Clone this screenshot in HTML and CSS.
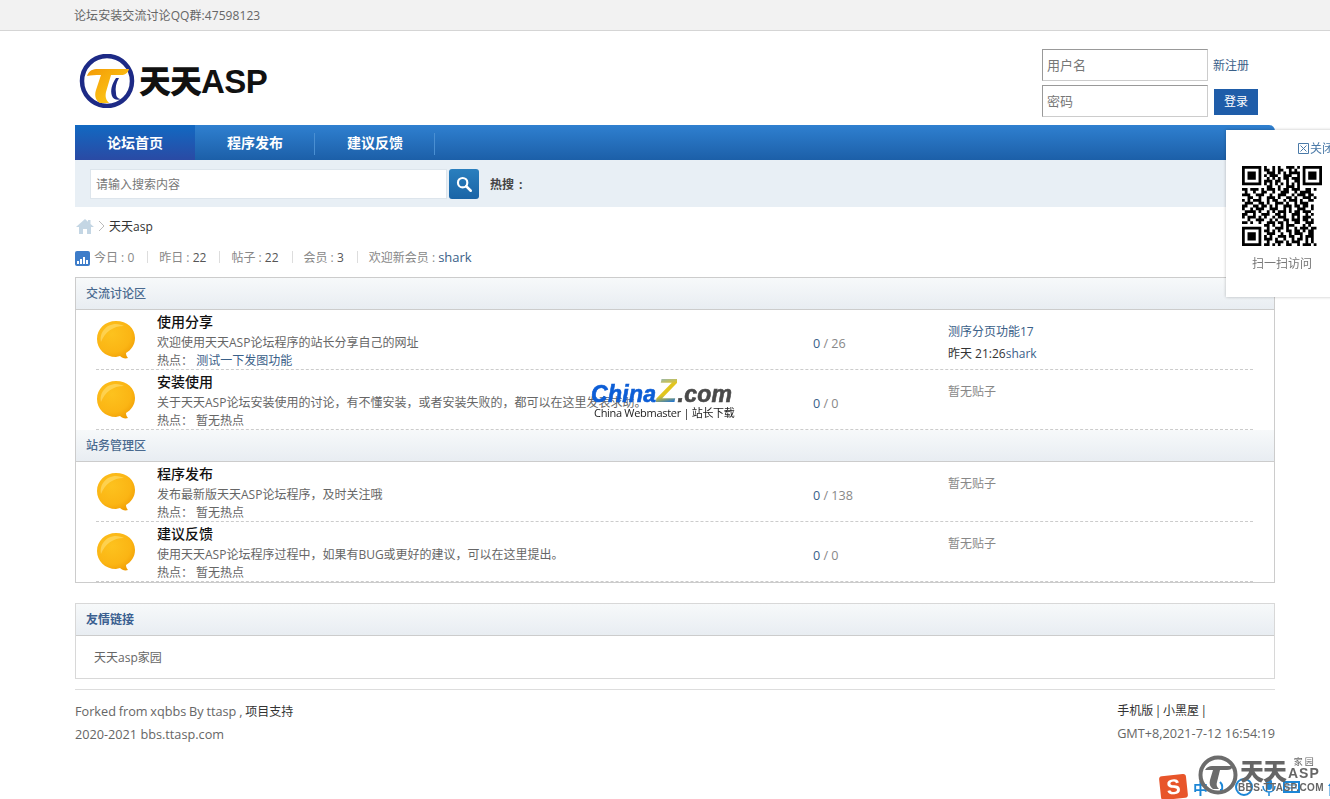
FILE: index.html
```html
<!DOCTYPE html>
<html lang="zh-CN">
<head>
<meta charset="utf-8">
<title>天天ASP</title>
<link rel="stylesheet" href="styles.css">
</head>
<body>
<div class="topbar"><div class="wrap">论坛安装交流讨论QQ群:47598123</div></div>
<div class="wrap">
  <header class="head">
    <a class="logo">
      <svg class="logo-mark" viewBox="0 0 58 54" width="58" height="54" aria-hidden="true">
        <defs><linearGradient id="lg" x1="0" y1="0" x2="1" y2="1"><stop offset="0" stop-color="#f39a06"/><stop offset="1" stop-color="#ffd21a"/></linearGradient></defs>
        <circle cx="29" cy="27" r="25" fill="none" stroke="#1d2a86" stroke-width="4.5"/>
        <path d="M9 22c2-6 6-7 11-7h31c-1 4-4 6-8 6H33l-5 17c-1 5 0 8 3 11h-9c-4-2-6-7-4-13l5-15c-6 0-10 0-14 1z" fill="url(#lg)"/>
        <path d="M38 24c-4 6-6 12-4 18 1 3 5 5 10 3-4 0-6-2-6-6-1-5 0-10 3-15z" fill="#1d2a86"/>
      </svg>
      <span class="logo-text">天天<b>ASP</b></span>
    </a>
    <form class="login">
      <div class="login-row"><input class="field" placeholder="用户名"><a class="link">新注册</a></div>
      <div class="login-row"><input class="field" placeholder="密码"><button class="btn" type="button">登录</button></div>
    </form>
  </header>

  <nav class="nav">
    <a class="nav-item active">论坛首页</a>
    <a class="nav-item">程序发布</a>
    <a class="nav-item">建议反馈</a>
  </nav>
  <div class="search">
    <input class="search-input" placeholder="请输入搜索内容">
    <button class="search-btn" type="button" aria-label="搜索">
      <svg viewBox="0 0 20 20" width="18" height="18" aria-hidden="true"><circle cx="8.5" cy="8.5" r="5.2" fill="none" stroke="#fff" stroke-width="2.4"/><path d="M12.5 12.5l5 5" stroke="#fff" stroke-width="2.8" stroke-linecap="round"/></svg>
    </button>
    <strong class="hot">热搜 :</strong>
  </div>

  <div class="crumb">
    <svg viewBox="0 0 18 16" width="18" height="16" aria-hidden="true"><path d="M9 1L0 9h3v7h4v-5h4v5h4V9h3l-3.500-3V2h-2.500v1.800z" fill="#c4d6e4"/></svg>
    <svg viewBox="0 0 8 12" width="8" height="12" aria-hidden="true"><path d="M1 1l5 5-5 5" fill="none" stroke="#bbb"/></svg>
    <span>天天asp</span>
  </div>

  <div class="stats">
    <svg viewBox="0 0 15 15" width="15" height="15" aria-hidden="true"><rect width="15" height="15" rx="2" fill="#3d7cc9"/><path d="M2 10h2v3H2zM5 8h2v5H5zM8 6h2v7H8zM11 9h2v4h-2z" fill="#fff"/></svg>
    <span class="stat first">今日 : 0</span>
    <span class="stat">昨日 : <i>22</i></span>
    <span class="stat">帖子 : <i>22</i></span>
    <span class="stat">会员 : <i>3</i></span>
    <span class="stat">欢迎新会员 : <a class="link">shark</a></span>
  </div>

  <section class="board">
    <h2 class="sec-title">交流讨论区</h2>
    <div class="row">
      <svg class="bubble" viewBox="0 0 40 40" aria-hidden="true"><use href="#bubble"/></svg>
      <div class="info"><h3>使用分享</h3><p>欢迎使用天天ASP论坛程序的站长分享自己的网址</p><p>热点： <a class="link">测试一下发图功能</a></p></div>
      <div class="count"><b>0</b> / 26</div>
      <div class="last"><a class="link">测序分页功能17</a><span class="dark">昨天 21:26<a class="link">shark</a></span></div>
    </div>
    <div class="row">
      <svg class="bubble" viewBox="0 0 40 40" aria-hidden="true"><use href="#bubble"/></svg>
      <div class="info"><h3>安装使用</h3><p>关于天天ASP论坛安装使用的讨论，有不懂安装，或者安装失败的，都可以在这里发表求助。</p><p>热点： 暂无热点</p></div>
      <div class="count"><b>0</b> / 0</div>
      <div class="last none">暂无贴子</div>
    </div>
    <h2 class="sec-title">站务管理区</h2>
    <div class="row">
      <svg class="bubble" viewBox="0 0 40 40" aria-hidden="true"><use href="#bubble"/></svg>
      <div class="info"><h3>程序发布</h3><p>发布最新版天天ASP论坛程序，及时关注哦</p><p>热点： 暂无热点</p></div>
      <div class="count"><b>0</b> / 138</div>
      <div class="last none">暂无贴子</div>
    </div>
    <div class="row">
      <svg class="bubble" viewBox="0 0 40 40" aria-hidden="true"><use href="#bubble"/></svg>
      <div class="info"><h3>建议反馈</h3><p>使用天天ASP论坛程序过程中，如果有BUG或更好的建议，可以在这里提出。</p><p>热点： 暂无热点</p></div>
      <div class="count"><b>0</b> / 0</div>
      <div class="last none">暂无贴子</div>
    </div>
  </section>

  <section class="friends">
    <h2 class="sec-title strong">友情链接</h2>
    <div class="friend-body">天天asp家园</div>
  </section>

  <footer class="foot">
    <div><div class="foot-line">Forked from xqbbs By ttasp , <span class="dark">项目支持</span></div><div>2020-2021 bbs.ttasp.com</div></div>
    <div><div class="dark foot-nav">手机版 | 小黑屋 |</div><div>GMT+8,2021-7-12 16:54:19</div></div>
  </footer>
</div>

<svg class="defs" width="0" height="0" aria-hidden="true">
  <defs>
    <radialGradient id="bg" cx=".4" cy=".35" r=".75"><stop offset="0" stop-color="#fdc21e"/><stop offset=".65" stop-color="#fbb514"/><stop offset="1" stop-color="#ee9a02"/></radialGradient>
    <symbol id="bubble" viewBox="0 0 40 40">
      <path d="M20 1c11 0 19 7 19 17 0 7-4 12-9 15 0 2 1 4 2 5-3 1-6 0-8-2-1 0-3 1-4 1C9 37 1 29 1 19 1 9 9 1 20 1z" fill="url(#bg)"/>
      <path d="M5 22C3 13 10 4 20 4c3 0 6 1 8 2C17 6 9 12 5 22z" fill="#ffe27a" opacity=".55"/>
    </symbol>
  </defs>
</svg>

<aside class="qr-pop">
  <div class="qr-close"><svg viewBox="0 0 12 12" width="12" height="12" aria-hidden="true"><path d="M.5.500h10v10H.5zM2.500 2.500l6 6M8.500 2.500l-6 6" fill="none" stroke="#4b7aa8"/></svg>关闭</div>
  <svg class="qr" viewBox="0 0 29 29" width="80" height="80" aria-hidden="true">
    <path d="M0 0h7v7H0zM1 1v5h5V1zM2 2h3v3H2zM22 0h7v7h-7zM23 1v5h5V1zM24 2h3v3h-3zM0 22h7v7H0zM1 23v5h5v-5zM2 24h3v3H2z" fill-rule="evenodd"/>
    <path fill="none" stroke="#000" d="M8 .5h1m2 0h1m1 0h1m2 0h3m1 0h1M8 1.500h2m1 0h1m1 0h2m2 0h1m1 0h1M9 2.500h3m1 0h1m1 0h1m1 0h4M8 3.500h1m1 0h3m2 0h3m2 0h1M9 4.500h1m1 0h1m1 0h1m1 0h2m1 0h3M8 5.500h3m1 0h2m2 0h1m2 0h2M8 6.500h1m1 0h1m1 0h1m1 0h1m1 0h1m1 0h1m1 0h1M9 7.500h2m2 0h1m2 0h3m1 0h1M0 8.500h2m1 0h3m1 0h1m1 0h3m1 0h1m1 0h2m1 0h3m2 0h2m1 0h1M1 9.500h1m2 0h1m2 0h2m2 0h1m2 0h3m2 0h1m1 0h4M0 10.500h3m2 0h3m2 0h1m2 0h3m2 0h1m1 0h3m1 0h2M2 11.500h2m2 0h1m2 0h3m1 0h1m2 0h2m1 0h1m2 0h3m1 0h1M0 12.500h1m1 0h1m1 0h3m2 0h1m1 0h2m2 0h1m1 0h3m1 0h1m2 0h2M1 13.500h3m2 0h2m1 0h1m2 0h3m1 0h1m2 0h1m1 0h3M0 14.500h2m2 0h2m1 0h2m1 0h1m1 0h1m2 0h3m1 0h2m1 0h2m1 0h1M0 15.500h1m2 0h1m1 0h3m2 0h3m2 0h1m1 0h1m2 0h3m2 0h1M1 16.500h4m1 0h1m2 0h1m1 0h1m1 0h3m1 0h1m1 0h2m1 0h3M0 17.500h2m2 0h1m2 0h3m2 0h2m1 0h1m2 0h3m2 0h1m1 0h1M0 18.500h1m1 0h3m1 0h1m1 0h1m2 0h1m1 0h3m2 0h1m1 0h1m1 0h3M2 19.500h1m2 0h3m2 0h1m1 0h1m2 0h2m1 0h3m1 0h2m1 0h1M0 20.500h2m1 0h1m2 0h1m2 0h3m1 0h2m1 0h1m2 0h2m2 0h3M8 21.500h2m1 0h1m2 0h1m1 0h3m3 0h1m1 0h1M9 22.500h1m2 0h3m1 0h1m2 0h1m1 0h3m1 0h2M8 23.500h2m1 0h1m1 0h1m2 0h2m1 0h2m1 0h1m1 0h2M9 24.500h3m2 0h1m2 0h1m1 0h3m2 0h2M8 25.500h1m1 0h1m2 0h3m1 0h2m2 0h1m1 0h3M8 26.500h3m1 0h1m2 0h1m2 0h1m1 0h2m1 0h1m1 0h1M9 27.500h1m2 0h3m1 0h1m1 0h3m2 0h1m1 0h1M8 28.500h2m1 0h1m1 0h1m2 0h2m2 0h1m1 0h3m1 0h1"/>
  </svg>
  <div class="qr-label">扫一扫访问</div>
</aside>

<div class="mark-cz">
  <div class="cz-top"><span class="cz-blue">China</span><span class="cz-z">Z</span><span class="cz-gray">.com</span></div>
  <div class="cz-sub">China Webmaster | 站长下载</div>
</div>

<div class="ime">
  <span class="ime-s">S</span>
  <span class="ime-zh">中</span>
  <svg viewBox="0 0 120 20" width="120" height="20" aria-hidden="true">
    <path d="M6 5c3 3 3 6 1 10M9 15l-2 0 0-3" fill="none" stroke="#1c86d6" stroke-width="2"/>
    <circle cx="30" cy="10" r="8" fill="none" stroke="#1c86d6" stroke-width="2"/>
    <rect x="52" y="2" width="6" height="11" rx="3" fill="#1c86d6"/><path d="M49 9c0 8 12 8 12 0M55 15v4" fill="none" stroke="#1c86d6" stroke-width="1.500"/>
    <rect x="70" y="5" width="15" height="10" fill="none" stroke="#1c86d6" stroke-width="2"/><path d="M72 8h11M72 11h11" stroke="#1c86d6"/>
    <path d="M114 9l3-4 3 4zM115.500 9h3v10h-3z" fill="#1c86d6"/>
  </svg>
</div>

<div class="mark-tt">
  <svg class="tt-logo" viewBox="0 0 40 40" width="40" height="40" aria-hidden="true">
    <circle cx="20" cy="20" r="17.500" fill="none" stroke="#6c6c6c" stroke-width="4"/>
    <path d="M7 15c2-3 4-4 7-4h21c-1 3-3 4-6 4h-7l-3 12c-1 3 0 5 2 7h-6c-3-2-4-5-3-9l3-10c-3 0-6 0-8 0z" fill="#6c6c6c"/>
  </svg>
  <div class="tt-text"><span class="tt-cn">天天</span><span class="tt-asp"><em>家 园</em><b>ASP</b></span></div>
  <div class="tt-url">BBS.TTASP.COM</div>
</div>
```

FILE: styles.css
```css
* { box-sizing: border-box; }
html, body { margin: 0; padding: 0; }
body {
  font-family: "Open Sans", "Noto Sans CJK SC", sans-serif;
  font-size: 12px;
  color: #666;
  background: #fff;
  overflow: hidden;
  height: 799px;
}
h2, h3, p { margin: 0; font-weight: normal; }
i { font-style: normal; color: #555; }
.wrap { width: 1200px; margin-left: 75px; }
.link { color: #3a6088; text-decoration: none; }
.dark { color: #333; }
.defs { position: absolute; }

.topbar { height: 31px; background: #f2f2f2; border-bottom: 1px solid #d5d5d5; padding-top: 1px; line-height: 30px; color: #666; }
.topbar .wrap { margin-left: 74px; letter-spacing: .08px; }

.head { height: 94px; display: flex; justify-content: space-between; }
.logo { display: flex; align-items: center; gap: 3px; padding: 5px 0 0 3px; height: 94px; }
.logo-mark { flex: none; }
.logo-text { font: 900 32px/1 "Noto Sans CJK SC", sans-serif; color: #111; letter-spacing: -1px; }
.logo-text b { font-family: "Liberation Sans", sans-serif; font-size: 33px; letter-spacing: -.6px; }

.login { width: 233px; padding-top: 18px; display: flex; flex-direction: column; gap: 4px; }
.login-row { display: flex; align-items: center; height: 32px; gap: 5px; }
.field { width: 166px; height: 32px; padding: 0 4px 1px; border: 1px solid #ccc; border-top-color: #999; border-left-color: #999; font: 13px "Open Sans", "Noto Sans CJK SC", sans-serif; background: #fff; outline: 0; }
.field::placeholder { color: #777; }
.btn { width: 44px; height: 26px; margin-top: 2px; margin-left: 1px; border: 0; background: #1f5da9; color: #fff; font: 12px "Open Sans", "Noto Sans CJK SC", sans-serif; padding: 0 0 2px; }

.nav { height: 35px; display: flex; background: linear-gradient(#2f80d0, #1c5fa8); border-radius: 0 6px 0 0; }
.nav-item { width: 120px; text-align: center; font: 700 14px/34px "Noto Sans CJK SC", sans-serif; color: #fff; position: relative; }
.nav-item::after { content: ""; position: absolute; right: 0; top: 8px; bottom: 5px; width: 1px; background: #4a8fd2; }
.nav-item.active { background: linear-gradient(#1269c2, #2a4aa4); }
.nav-item.active::after { display: none; }

.search { height: 47px; background: #e8eff5; display: flex; align-items: center; padding-left: 15px; }
.search-input { width: 357px; height: 30px; border: 1px solid #dde5ec; background: #fff; padding: 2px 5px 0; font: 12px "Open Sans", "Noto Sans CJK SC", sans-serif; outline: 0; }
.search-input::placeholder { color: #777; }
.search-btn { width: 30px; height: 30px; margin-left: 2px; border: 0; padding: 0; border-radius: 3px; background: linear-gradient(#2a7fbe, #1a64a6); display: flex; align-items: center; justify-content: center; }
.hot { margin-left: 11px; padding-top: 1px; color: #444; font-weight: 700; word-spacing: 2px; }

.crumb { display: flex; align-items: center; height: 20px; margin-top: 9px; gap: 4px; padding-left: 1px; color: #333; }
.crumb span { margin-left: -1px; }
.stats { display: flex; align-items: center; height: 20px; margin-top: 11px; color: #888; }
.stats svg { margin-top: 3px; }
.stat { padding: 0 13px 0 12px; position: relative; }
.stat + .stat::before { content: ""; position: absolute; left: 0; top: 3px; height: 12px; width: 1px; background: #ddd; }
.stat.first { padding-left: 4px; color: #888; }
.stats .link { font-size: 13px; }

.board { margin-top: 10px; height: 306px; border: 1px solid #ccc; }
.sec-title { height: 32px; line-height: 31px; padding-left: 10px; font-size: 12px; font-weight: 500; color: #4a6a8f; background: linear-gradient(#f7f9fa, #e8edf2); border-bottom: 1px solid #ccc; }
.sec-title.strong { color: #3a5f90; font-weight: 700; }

.row { height: 60px; margin: 0 21px 0 20px; display: grid; grid-template-columns: 61px 656px 135px 1fr; border-bottom: 1px dashed #ccc; }
.bubble { width: 40px; height: 40px; margin-top: 10px; }
.info h3 { font-size: 14px; line-height: 20px; margin-top: 1px; color: #111; font-family: "Noto Sans CJK SC", sans-serif; font-weight: 500; }
.info p { line-height: 21px; margin-top: 1px; white-space: nowrap; }
.info p + p { line-height: 17px; margin-top: -1px; }
.count { padding-top: 25px; line-height: 18px; font-size: 12.600px; color: #888; }
.count b { font-weight: normal; color: #3a6088; }
.last { padding-top: 11px; line-height: 22px; display: flex; flex-direction: column; }
.last.none { color: #888; padding-top: 11px; }

.friends { margin-top: 20px; height: 76px; border: 1px solid #d8d8d8; }
.friend-body { padding: 12px 18px 0; line-height: 20px; color: #666; }

.foot { margin-top: 10px; padding-top: 10px; border-top: 1px solid #ddd; display: flex; justify-content: space-between; font-size: 12.700px; line-height: 22px; color: #666; }
.foot .dark { font-size: 12px; }
.foot-line { word-spacing: -.5px; }
.foot-nav { word-spacing: -1.500px; }

.qr-pop { position: fixed; left: 1226px; top: 130px; width: 112px; height: 167px; background: #fff; box-shadow: 0 0 3px rgba(0,0,0,.25); display: flex; flex-direction: column; align-items: center; }
.qr-close { align-self: flex-start; margin: 11px 0 0 72px; line-height: 16px; color: #4b7aa8; display: flex; align-items: center; white-space: nowrap; }
.qr { margin-top: 9px; }
.qr-label { margin-top: 9px; line-height: 18px; color: #777; }

.mark-cz { position: fixed; left: 591px; top: 378px; width: 150px; }
.cz-top { font: italic 900 23px/24px "Liberation Sans", sans-serif; white-space: nowrap; -webkit-text-stroke: .6px currentColor; letter-spacing: .3px; }
.cz-blue { color: #0d5ed6; }
.cz-z { font-size: 34px; line-height: 24px; color: #0d5ed6; background: linear-gradient(165deg, #7fb3e0 15%, #e2c51e 40%, #e2c51e 60%, #2a78c8 80%); -webkit-background-clip: text; background-clip: text; -webkit-text-fill-color: transparent; -webkit-text-stroke: 0; }
.cz-gray { color: #4a4a4a; }
.cz-sub { font: 11px/14px "Open Sans", "Noto Sans CJK SC", sans-serif; color: #222; padding: 0 0 0 3px; letter-spacing: -.3px; white-space: nowrap; }

.ime { position: fixed; left: 1160px; top: 775px; display: flex; align-items: center; gap: 6px; height: 24px; }
.ime-s { width: 27px; height: 24px; background: #e8552a; color: #fff; font: 700 21px/24px "Liberation Sans", sans-serif; text-align: center; border-radius: 3px; transform: rotate(-6deg); }
.ime-zh { font: 700 15px/20px "Noto Sans CJK SC", sans-serif; color: #1c86d6; margin-top: 2px; }

.mark-tt { position: fixed; left: 1198px; top: 755px; width: 132px; height: 44px; }
.tt-logo { position: absolute; left: 0; top: 0; }
.tt-text { position: absolute; left: 42px; top: 1px; display: flex; }
.tt-cn { font: 900 24px/28px "Noto Sans CJK SC", sans-serif; color: #666; letter-spacing: -1px; }
.tt-asp { display: flex; flex-direction: column; align-items: flex-end; padding-left: 2px; color: #666; }
.tt-asp em { font: 9px/11px "Noto Sans CJK SC", sans-serif; font-style: normal; margin-right: 6px; }
.tt-asp b { font: 700 14px/13px "Liberation Sans", sans-serif; letter-spacing: 1px; }
.tt-url { position: absolute; left: 40px; top: 27px; font: 700 10px/12px "Liberation Sans", sans-serif; color: #666; letter-spacing: .4px; white-space: nowrap; }
```
